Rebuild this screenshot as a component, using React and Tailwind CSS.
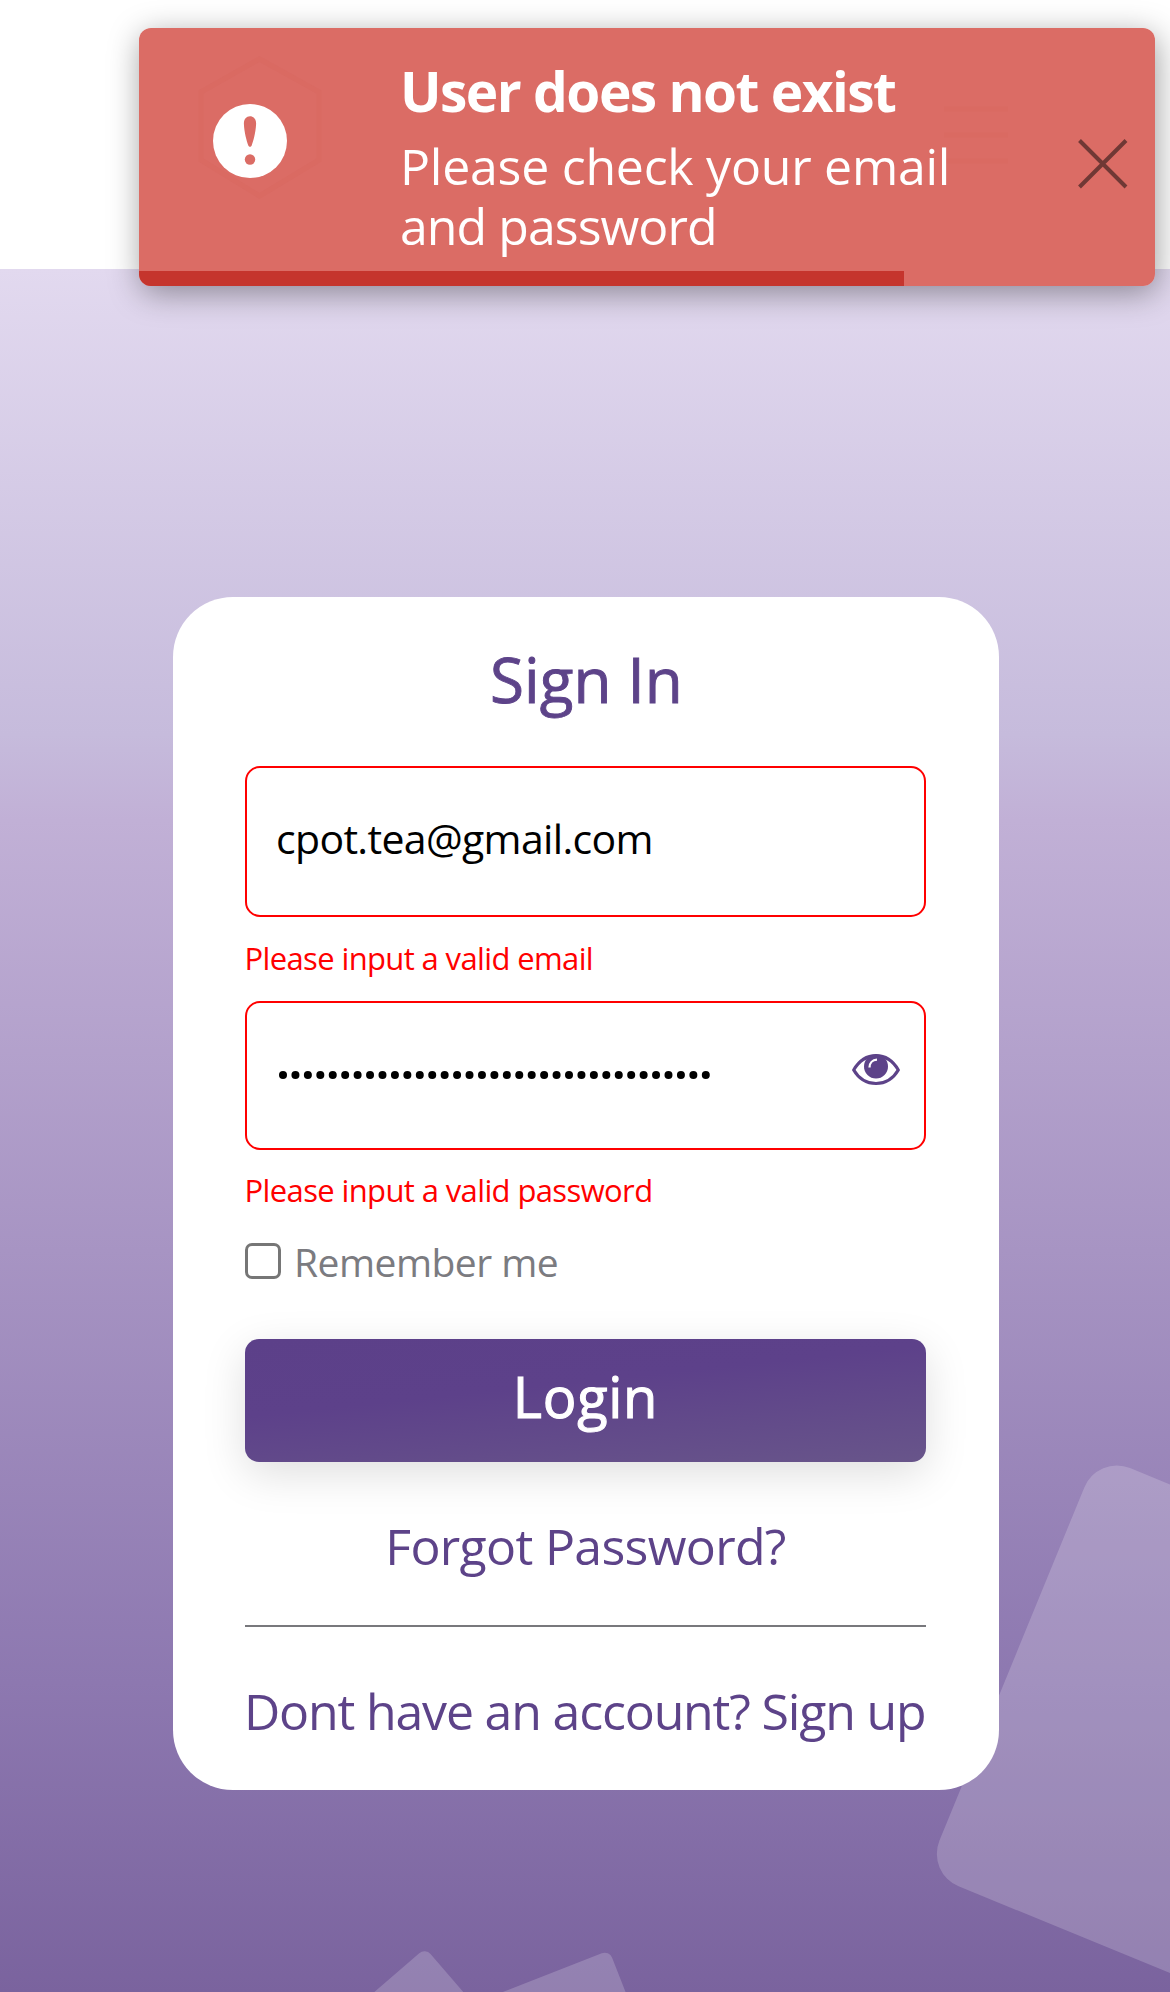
import React from "react";

function Backdrop() {
  return (
    <svg className="absolute inset-0" width="1170" height="1992" viewBox="0 0 1170 1992" fill="#fff" fillOpacity="0.19" aria-hidden="true">
      <rect width="452" height="452" rx="35" transform="translate(1097.7 1454.8) rotate(22.3)" />
      <rect width="160" height="160" rx="8" transform="translate(425.3 1948) rotate(49.2)" />
      <rect width="160" height="160" rx="8" transform="translate(609.2 1950.3) rotate(68.6)" />
    </svg>
  );
}

function HeaderGhost() {
  return (
    <svg className="absolute inset-0" width="1016" height="258" viewBox="139 28 1016 258" fill="none" stroke="#d9675f" strokeOpacity="0.5" strokeWidth="5" aria-hidden="true">
      <path d="M259.5 59 319 92V160L259.5 196 201 160V92Z" />
      <path d="M944 109H1008M944 135H1008M944 161H1008" />
    </svg>
  );
}

function Toast() {
  return (
    <div role="alert" className="absolute top-[28px] left-[139px] h-[258px] w-[1016px] overflow-hidden rounded-[12px] bg-[#db6c65] text-white">
      <HeaderGhost />
      <div className="relative flex h-full">
        <svg className="mt-[76px] ml-[74px] h-[74px] w-[74px] shrink-0" viewBox="0 0 74 74" aria-hidden="true">
          <circle cx="37" cy="37" r="37" fill="#fff" />
          <path d="M37 12.3C40.8 12.3 43.3 15.5 43.1 20C42.8 28 40.5 36.5 38.7 41.5C38 43.3 36 43.3 35.3 41.5C33.5 36.5 31.2 28 30.9 20C30.7 15.5 33.2 12.3 37 12.3Z" fill="#db6c65" />
          <circle cx="37" cy="55.5" r="5.2" fill="#db6c65" />
        </svg>
        <div className="ml-[113px] w-[600px] pt-[33px]">
          <div className="text-[55px] leading-[60px] font-bold tracking-[-1.52px] whitespace-nowrap">User does not exist</div>
          <p className="mt-[15px] text-[50px] leading-[60px] tracking-[-0.25px] whitespace-nowrap">
            Please check your email
            <br />
            <span className="tracking-[-0.94px]">and password</span>
          </p>
        </div>
        <svg className="mt-[110px] ml-[77px] h-[52px] w-[52px]" viewBox="0 0 52 52" stroke="#703835" strokeWidth="4" aria-hidden="true">
          <path d="M2.5 2.5 49 49M49 2.5 2.5 49" />
        </svg>
      </div>
      <div className="absolute bottom-0 left-0 h-[15px] w-[765px] bg-[#c5352d]" />
    </div>
  );
}

function EyeIcon() {
  return (
    <svg width="48" height="32" viewBox="0 0 48 32" aria-hidden="true">
      <path d="M1.7 16C7 7 15 1.7 24 1.7S41 7 46.3 16C41 25 33 29.5 24 29.5S7 25 1.7 16Z" fill="#fff" stroke="#5d4389" strokeWidth="3.2" strokeLinejoin="round" />
      <circle cx="24" cy="12.5" r="12" fill="#5d4389" />
      <path d="M17.5 13.5C17.5 9 20.5 5.8 25 5.6" fill="none" stroke="#fff" strokeWidth="2.3" />
    </svg>
  );
}

function PasswordDots() {
  return (
    <svg width="432" height="10" viewBox="0 0 432 10" aria-hidden="true">
      {Array.from({ length: 35 }, (_, i) => (
        <circle key={i} cx={5 + i * 12.435} cy="5" r="4" />
      ))}
    </svg>
  );
}

export default function App() {
  return (
    <div className="relative h-[1992px] w-[1170px] overflow-hidden bg-white font-['Open_Sans','Noto_Sans',sans-serif]">
      <header className="h-[269px] bg-white" />
      <main className="h-[1723px] bg-[linear-gradient(180deg,#e2d9ef_0%,#c6bbdc_27%,#c1b0d6_32%,#8d78b0_82%,#7a639e_100%)] pt-[328px]">
        <Backdrop />
        <section className="relative ml-[172.5px] flex h-[1193px] w-[826px] flex-col rounded-[60px] bg-white pt-[42px] pr-[72.5px] pl-[72.5px] text-[#5d4389]">
          <h1 className="pl-[2px] text-center text-[62px] leading-[80px] font-medium [-webkit-text-stroke:0.9px_#5d4389]">Sign In</h1>

          <div className="mt-[47px] flex h-[151px] items-center rounded-[15px] border-2 border-[#ff0000] pb-[7px] pl-[29px] text-black">
            <span className="text-[41px] leading-[56px] tracking-[-0.66px]">cpot.tea@gmail.com</span>
          </div>
          <p className="mt-[19px] text-[31px] leading-[44px] tracking-[-0.63px] text-[#ff0000] -ml-[0.5px]">Please input a valid email</p>

          <div className="mt-[21px] flex h-[149px] items-center justify-between rounded-[15px] border-2 border-[#ff0000] pr-[24px] pl-[31px]">
            <span className="mb-[2px] text-black"><PasswordDots /></span>
            <span className="mb-[11px]"><EyeIcon /></span>
          </div>
          <p className="mt-[18px] text-[31px] leading-[44px] tracking-[-0.62px] text-[#ff0000] -ml-[0.5px]">Please input a valid password</p>

          <label className="mt-[28px] flex h-[44px] items-start text-[39px] leading-[44px] tracking-[-0.52px] text-[#7b7b80]">
            <span className="mt-[3px] mr-[13px] h-[36px] w-[36px] rounded-[7px] border-3 border-[#767676]" />
            Remember me
          </label>

          <button className="mt-[55px] flex h-[123px] shrink-0 items-center justify-center rounded-[14px] bg-[linear-gradient(174deg,#5c4089_0%,#5d418a_40%,#68558a_100%)] pb-[9px] text-[56px] leading-[70px] font-medium tracking-[0.7px] text-white shadow-[0_12px_44px_rgba(0,0,0,0.13)] [-webkit-text-stroke:1.1px_#fff]">Login</button>

          <a className="mt-[54px] text-center text-[50px] leading-[60px] tracking-[-0.68px]">Forgot Password?</a>
          <div className="mt-[49px] h-[2px] bg-[#78787c]" />
          <a className="mt-[54px] -ml-[1px] text-[50px] leading-[60px] tracking-[-1.17px] whitespace-nowrap">Dont have an account? Sign up</a>
        </section>
      </main>
      <div className="absolute top-[28px] left-[139px] h-[258px] w-[1016px] rounded-[12px] shadow-[2px_7px_32px_rgba(0,0,0,0.38)]" />
      <Toast />
    </div>
  );
}
